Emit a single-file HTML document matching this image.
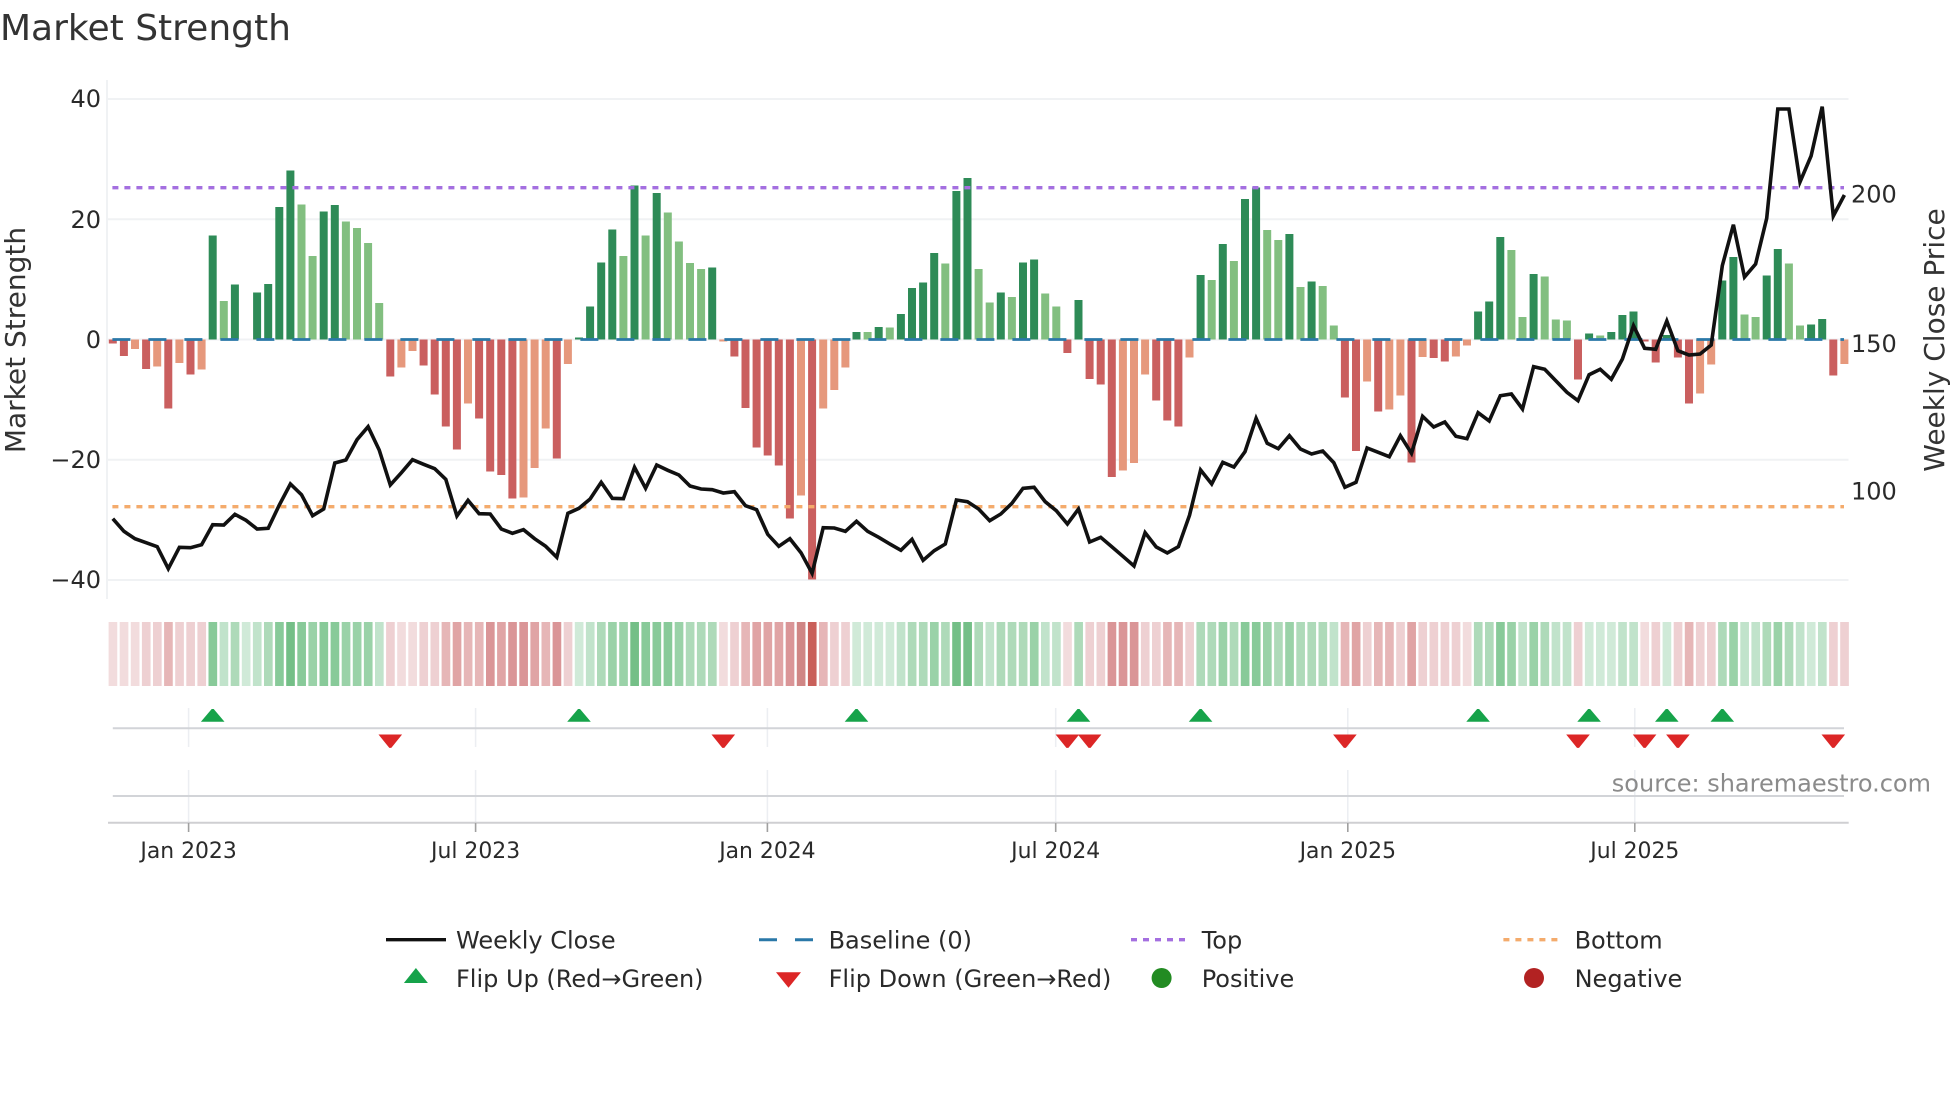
<!DOCTYPE html>
<html><head><meta charset="utf-8"><title>Market Strength</title>
<style>html,body{margin:0;padding:0;background:#fff;width:1960px;height:1102px;overflow:hidden}svg{display:block}text{font-family:"DejaVu Sans","Liberation Sans",sans-serif}</style></head>
<body>
<svg xmlns="http://www.w3.org/2000/svg" width="1960" height="1102" viewBox="0 0 1960 1102">
<rect width="1960" height="1102" fill="#fff"/>
<defs>
<path id="u" d="M-1 709h2l10.8 12.7h-23.6z" fill="#16a34a"/>
<path id="d" d="M-11.8 734.5h23.6l-10.8 13.4h-2z" fill="#dc2626"/>
</defs>
<g stroke="#f0f2f4" stroke-width="2" fill="none">
<path d="M107 80V599"/>
<path d="M107 99H1848.5M107 219.3H1848.5M107 339.5H1848.5M107 459.7H1848.5M107 580H1848.5"/>
</g>
<g transform="translate(108.8 339.5) scale(11.1 1)">
<path fill="#2e8b57" d="M9 0v-104h.72v104zM11 0v-55h.72v55zM13 0v-47h.72v47zM14 0v-55.5h.72v55.5zM15 0v-132.5h.72v132.5zM16 0v-169h.72v169zM19 0v-128h.72v128zM20 0v-134.5h.72v134.5zM42 0v-2h.72v2zM43 0v-33h.72v33zM44 0v-77h.72v77zM45 0v-110h.72v110zM47 0v-154h.72v154zM49 0v-146.5h.72v146.5zM54 0v-72h.72v72zM67 0v-7.5h.72v7.5zM69 0v-12.5h.72v12.5zM71 0v-25.5h.72v25.5zM72 0v-51.5h.72v51.5zM73 0v-57h.72v57zM74 0v-86.5h.72v86.5zM76 0v-148.5h.72v148.5zM77 0v-161.5h.72v161.5zM80 0v-47h.72v47zM82 0v-77h.72v77zM83 0v-80h.72v80zM87 0v-39.5h.72v39.5zM98 0v-64.5h.72v64.5zM100 0v-95.5h.72v95.5zM102 0v-140.5h.72v140.5zM103 0v-152h.72v152zM106 0v-105.5h.72v105.5zM108 0v-58h.72v58zM123 0v-28h.72v28zM124 0v-38h.72v38zM125 0v-102.5h.72v102.5zM128 0v-65.5h.72v65.5zM133 0v-6h.72v6zM135 0v-7.5h.72v7.5zM136 0v-24.5h.72v24.5zM137 0v-28h.72v28zM140 0v-4.5h.72v4.5zM145 0v-59h.72v59zM146 0v-82.5h.72v82.5zM149 0v-64h.72v64zM150 0v-90.5h.72v90.5zM153 0v-15h.72v15zM154 0v-20.5h.72v20.5z"/>
<path fill="#82bf80" d="M10 0v-38.5h.72v38.5zM17 0v-135h.72v135zM18 0v-83.5h.72v83.5zM21 0v-118h.72v118zM22 0v-111.5h.72v111.5zM23 0v-96.5h.72v96.5zM24 0v-36.5h.72v36.5zM46 0v-83.5h.72v83.5zM48 0v-104h.72v104zM50 0v-127h.72v127zM51 0v-98h.72v98zM52 0v-76.5h.72v76.5zM53 0v-70.5h.72v70.5zM68 0v-7.5h.72v7.5zM70 0v-12h.72v12zM75 0v-76h.72v76zM78 0v-70.5h.72v70.5zM79 0v-37h.72v37zM81 0v-42.5h.72v42.5zM84 0v-46h.72v46zM85 0v-33h.72v33zM99 0v-59.5h.72v59.5zM101 0v-78.5h.72v78.5zM104 0v-109.5h.72v109.5zM105 0v-99.5h.72v99.5zM107 0v-52.5h.72v52.5zM109 0v-53.5h.72v53.5zM110 0v-14h.72v14zM126 0v-89.5h.72v89.5zM127 0v-22.5h.72v22.5zM129 0v-63h.72v63zM130 0v-20h.72v20zM131 0v-19h.72v19zM134 0v-4h.72v4zM147 0v-25h.72v25zM148 0v-22.5h.72v22.5zM151 0v-76h.72v76zM152 0v-14h.72v14z"/>
<path fill="#ca5f5f" d="M0 0v4h.72v-4zM1 0v16.5h.72v-16.5zM3 0v29.5h.72v-29.5zM5 0v69h.72v-69zM7 0v35h.72v-35zM25 0v37h.72v-37zM28 0v26h.72v-26zM29 0v55h.72v-55zM30 0v87h.72v-87zM31 0v110h.72v-110zM33 0v79h.72v-79zM34 0v132h.72v-132zM35 0v135.5h.72v-135.5zM36 0v159h.72v-159zM40 0v119h.72v-119zM56 0v17h.72v-17zM57 0v68.5h.72v-68.5zM58 0v108h.72v-108zM59 0v116h.72v-116zM60 0v126h.72v-126zM61 0v179h.72v-179zM63 0v240h.72v-240zM86 0v13.5h.72v-13.5zM88 0v39.5h.72v-39.5zM89 0v45h.72v-45zM90 0v137.5h.72v-137.5zM94 0v61h.72v-61zM95 0v81h.72v-81zM96 0v87h.72v-87zM111 0v58h.72v-58zM112 0v111.5h.72v-111.5zM114 0v72h.72v-72zM117 0v123h.72v-123zM119 0v18.5h.72v-18.5zM120 0v22h.72v-22zM132 0v40h.72v-40zM138 0v2h.72v-2zM139 0v23h.72v-23zM141 0v18h.72v-18zM142 0v64h.72v-64zM155 0v36h.72v-36z"/>
<path fill="#e6987c" d="M2 0v9.5h.72v-9.5zM4 0v27h.72v-27zM6 0v23.5h.72v-23.5zM8 0v30h.72v-30zM26 0v28h.72v-28zM27 0v11.5h.72v-11.5zM32 0v64h.72v-64zM37 0v158h.72v-158zM38 0v128.5h.72v-128.5zM39 0v89h.72v-89zM41 0v24.5h.72v-24.5zM55 0v2h.72v-2zM62 0v156h.72v-156zM64 0v69h.72v-69zM65 0v50.5h.72v-50.5zM66 0v28h.72v-28zM91 0v131h.72v-131zM92 0v123.5h.72v-123.5zM93 0v35h.72v-35zM97 0v18h.72v-18zM113 0v42h.72v-42zM115 0v70h.72v-70zM116 0v56h.72v-56zM118 0v17.5h.72v-17.5zM121 0v17h.72v-17zM122 0v6h.72v-6zM143 0v54h.72v-54zM144 0v25h.72v-25zM156 0v24.5h.72v-24.5z"/>
</g>
<path d="M112.4 339.5H1844" stroke="#2a78a8" stroke-width="2.8" stroke-dasharray="18 18" fill="none"/>
<path d="M112.4 187.7H1844" stroke="#a46fe0" stroke-width="3.4" stroke-dasharray="6 6" fill="none"/>
<path d="M112.4 506.7H1844" stroke="#f4ab6c" stroke-width="3.4" stroke-dasharray="6 6" fill="none"/>
<polyline transform="translate(112.8 0) scale(11.1 1)" fill="none" stroke="#111" stroke-width="3.6" stroke-linejoin="miter" vector-effect="non-scaling-stroke" points="0,518.7 1,531.3 2,538.7 3,542.7 4,546.7 5,568.7 6,547.3 7,547.7 8,544.7 9,524.7 10,525 11,514.3 12,520.3 13,529 14,528.3 15,505 16,484 17,494.7 18,515.7 19,509 20,463 21,460 22,439.7 23,426.7 24,450 25,485 26,472.7 27,459.7 28,464.3 29,468.7 30,479.3 31,516 32,500.3 33,513.7 34,514 35,529 36,533.3 37,529.7 38,538.7 39,546.3 40,557.3 41,513.3 42,508.3 43,499 44,482.3 45,498.3 46,498.7 47,467.3 48,488.3 49,465 50,470.3 51,475 52,486 53,489 54,489.7 55,493 56,491.7 57,505.7 58,509.7 59,534.3 60,546.3 61,538.7 62,552.7 63,573.3 64,527.7 65,528 66,531.3 67,521.3 68,531.3 69,537.3 70,544 71,550.3 72,539.3 73,560.3 74,550.7 75,544 76,500 77,501.7 78,509 79,520.7 80,514 81,503.3 82,488.3 83,487.3 84,501.7 85,510.7 86,524 87,509 88,542 89,537.3 90,546.7 91,556.3 92,566 93,532.7 94,547 95,553 96,546.7 97,515.3 98,470 99,484 100,462.3 101,467 102,451.7 103,418.3 104,443.3 105,448.7 106,435.7 107,449 108,454 109,451 110,462.7 111,487.3 112,482.3 113,448 114,452.3 115,456.7 116,435.7 117,453.3 118,416.3 119,427 120,422 121,436.3 122,438.7 123,412.7 124,421 125,395.7 126,394 127,409 128,366.7 129,369.3 130,380.7 131,392.3 132,400.7 133,374.7 134,369.3 135,379.3 136,359 137,325.7 138,348.3 139,349.3 140,321 141,350.7 142,355 143,354 144,345 145,265.7 146,224.7 147,277 148,264 149,218.3 150,109 151,109 152,182 153,156 154,106.7 155,216 156,195"/>
<g transform="translate(108.6 622) scale(11.1 64)">
<path fill="#d0ead8" d="M12 0h.78v1h-.78zM42 0h.78v1h-.78zM67 0h.78v1h-.78zM68 0h.78v1h-.78zM69 0h.78v1h-.78zM70 0h.78v1h-.78zM133 0h.78v1h-.78zM134 0h.78v1h-.78zM135 0h.78v1h-.78zM140 0h.78v1h-.78zM153 0h.78v1h-.78z"/>
<path fill="#c1e3cb" d="M10 0h.78v1h-.78zM13 0h.78v1h-.78zM24 0h.78v1h-.78zM43 0h.78v1h-.78zM71 0h.78v1h-.78zM79 0h.78v1h-.78zM84 0h.78v1h-.78zM85 0h.78v1h-.78zM110 0h.78v1h-.78zM127 0h.78v1h-.78zM130 0h.78v1h-.78zM131 0h.78v1h-.78zM136 0h.78v1h-.78zM137 0h.78v1h-.78zM147 0h.78v1h-.78zM148 0h.78v1h-.78zM152 0h.78v1h-.78zM154 0h.78v1h-.78z"/>
<path fill="#aedab9" d="M11 0h.78v1h-.78zM14 0h.78v1h-.78zM44 0h.78v1h-.78zM52 0h.78v1h-.78zM53 0h.78v1h-.78zM54 0h.78v1h-.78zM72 0h.78v1h-.78zM73 0h.78v1h-.78zM75 0h.78v1h-.78zM78 0h.78v1h-.78zM80 0h.78v1h-.78zM81 0h.78v1h-.78zM82 0h.78v1h-.78zM87 0h.78v1h-.78zM98 0h.78v1h-.78zM99 0h.78v1h-.78zM101 0h.78v1h-.78zM105 0h.78v1h-.78zM107 0h.78v1h-.78zM108 0h.78v1h-.78zM109 0h.78v1h-.78zM123 0h.78v1h-.78zM124 0h.78v1h-.78zM129 0h.78v1h-.78zM145 0h.78v1h-.78zM149 0h.78v1h-.78zM151 0h.78v1h-.78z"/>
<path fill="#9ad2a8" d="M18 0h.78v1h-.78zM21 0h.78v1h-.78zM22 0h.78v1h-.78zM23 0h.78v1h-.78zM45 0h.78v1h-.78zM46 0h.78v1h-.78zM51 0h.78v1h-.78zM74 0h.78v1h-.78zM83 0h.78v1h-.78zM100 0h.78v1h-.78zM104 0h.78v1h-.78zM106 0h.78v1h-.78zM126 0h.78v1h-.78zM128 0h.78v1h-.78zM146 0h.78v1h-.78zM150 0h.78v1h-.78z"/>
<path fill="#88ca99" d="M9 0h.78v1h-.78zM15 0h.78v1h-.78zM17 0h.78v1h-.78zM19 0h.78v1h-.78zM20 0h.78v1h-.78zM48 0h.78v1h-.78zM49 0h.78v1h-.78zM50 0h.78v1h-.78zM102 0h.78v1h-.78zM103 0h.78v1h-.78zM125 0h.78v1h-.78z"/>
<path fill="#74bf87" d="M16 0h.78v1h-.78zM47 0h.78v1h-.78zM76 0h.78v1h-.78zM77 0h.78v1h-.78z"/>
<path fill="#f2dcdd" d="M0 0h.78v1h-.78zM1 0h.78v1h-.78zM2 0h.78v1h-.78zM26 0h.78v1h-.78zM27 0h.78v1h-.78zM55 0h.78v1h-.78zM86 0h.78v1h-.78zM122 0h.78v1h-.78zM138 0h.78v1h-.78z"/>
<path fill="#eed0d2" d="M3 0h.78v1h-.78zM4 0h.78v1h-.78zM6 0h.78v1h-.78zM7 0h.78v1h-.78zM8 0h.78v1h-.78zM25 0h.78v1h-.78zM28 0h.78v1h-.78zM29 0h.78v1h-.78zM41 0h.78v1h-.78zM56 0h.78v1h-.78zM65 0h.78v1h-.78zM66 0h.78v1h-.78zM88 0h.78v1h-.78zM89 0h.78v1h-.78zM93 0h.78v1h-.78zM94 0h.78v1h-.78zM97 0h.78v1h-.78zM113 0h.78v1h-.78zM116 0h.78v1h-.78zM118 0h.78v1h-.78zM119 0h.78v1h-.78zM120 0h.78v1h-.78zM121 0h.78v1h-.78zM132 0h.78v1h-.78zM139 0h.78v1h-.78zM141 0h.78v1h-.78zM143 0h.78v1h-.78zM144 0h.78v1h-.78zM155 0h.78v1h-.78zM156 0h.78v1h-.78z"/>
<path fill="#e6b6b7" d="M5 0h.78v1h-.78zM30 0h.78v1h-.78zM32 0h.78v1h-.78zM33 0h.78v1h-.78zM39 0h.78v1h-.78zM57 0h.78v1h-.78zM64 0h.78v1h-.78zM95 0h.78v1h-.78zM96 0h.78v1h-.78zM111 0h.78v1h-.78zM114 0h.78v1h-.78zM115 0h.78v1h-.78zM142 0h.78v1h-.78z"/>
<path fill="#e0a4a5" d="M31 0h.78v1h-.78zM35 0h.78v1h-.78zM38 0h.78v1h-.78zM58 0h.78v1h-.78zM59 0h.78v1h-.78zM60 0h.78v1h-.78zM112 0h.78v1h-.78zM117 0h.78v1h-.78z"/>
<path fill="#da9597" d="M34 0h.78v1h-.78zM36 0h.78v1h-.78zM37 0h.78v1h-.78zM40 0h.78v1h-.78zM61 0h.78v1h-.78zM90 0h.78v1h-.78zM91 0h.78v1h-.78zM92 0h.78v1h-.78z"/>
<path fill="#d08685" d="M62 0h.78v1h-.78z"/>
<path fill="#c9605a" d="M63 0h.78v1h-.78z"/>
</g>
<g stroke="#eceef2" stroke-width="1.5" fill="none">
<path d="M188.6 708V747M475.6 708V747M767.4 708V747M1055.7 708V747M1347.8 708V747M1634.8 708V747"/>
<path d="M188.6 770V822M475.6 770V822M767.4 770V822M1055.7 770V822M1347.8 770V822M1634.8 770V822"/>
</g>
<g stroke="#d2d4d8" stroke-width="2" fill="none">
<path d="M112.8 728.3H1844M112.8 796H1844"/>
</g>
<path d="M108 822.7H1848.7" stroke="#cfcfd2" stroke-width="2" fill="none"/>
<path d="M188.6 823V832M475.6 823V832M767.4 823V832M1055.7 823V832M1347.8 823V832M1634.8 823V832" stroke="#a0a0a0" stroke-width="1.6" fill="none"/>
<use href="#u" x="212.7"/><use href="#u" x="579"/><use href="#u" x="856.5"/><use href="#u" x="1078.5"/><use href="#u" x="1200.6"/><use href="#u" x="1478.1"/><use href="#u" x="1589.1"/><use href="#u" x="1666.8"/><use href="#u" x="1722.3"/>
<use href="#d" x="390.3"/><use href="#d" x="723.3"/><use href="#d" x="1067.4"/><use href="#d" x="1089.6"/><use href="#d" x="1344.9"/><use href="#d" x="1578"/><use href="#d" x="1644.6"/><use href="#d" x="1677.9"/><use href="#d" x="1833.3"/>
<text x="0" y="40" font-size="36" fill="#333">Market Strength</text>
<g font-size="24" fill="#2a2a2a" text-anchor="end">
<text x="101" y="107">40</text><text x="101" y="228">20</text><text x="101" y="348">0</text><text x="101" y="468">−20</text><text x="101" y="588">−40</text>
</g>
<g font-size="24" fill="#2a2a2a">
<text x="1851" y="202.7">200</text><text x="1851" y="352">150</text><text x="1851" y="499.3">100</text>
</g>
<text transform="translate(25 340) rotate(-90)" font-size="28" fill="#333" text-anchor="middle">Market Strength</text>
<text transform="translate(1944 340) rotate(-90)" font-size="28" fill="#333" text-anchor="middle">Weekly Close Price</text>
<g font-size="21.9" fill="#2a2a2a" text-anchor="middle">
<text x="188.6" y="858">Jan 2023</text><text x="475.6" y="858">Jul 2023</text><text x="767.4" y="858">Jan 2024</text><text x="1055.7" y="858">Jul 2024</text><text x="1347.8" y="858">Jan 2025</text><text x="1634.8" y="858">Jul 2025</text>
</g>
<text x="1931" y="791.7" font-size="24" fill="#8b8b8b" text-anchor="end">source: sharemaestro.com</text>
<path d="M386 939.7H446" stroke="#111" stroke-width="3.4" fill="none"/>
<path d="M759 939.7H813.3" stroke="#2a78a8" stroke-width="3" stroke-dasharray="18 18" fill="none"/>
<path d="M1131 939.7H1186" stroke="#a46fe0" stroke-width="3.4" stroke-dasharray="6 6" fill="none"/>
<path d="M1503.4 939.7H1558" stroke="#f4ab6c" stroke-width="3.4" stroke-dasharray="6 6" fill="none"/>
<path d="M415.9 968l12 15h-24z" fill="#16a34a"/>
<path d="M776 972.3h25l-12.5 15.4z" fill="#dc2626"/>
<circle cx="1161.6" cy="978" r="10" fill="#228b22"/>
<circle cx="1534" cy="978" r="10" fill="#b22222"/>
<g font-size="24" fill="#2a2a2a">
<text x="456" y="948.6">Weekly Close</text><text x="828.6" y="948.6">Baseline (0)</text><text x="1201.7" y="948.6">Top</text><text x="1574.6" y="948.6">Bottom</text>
<text x="456" y="986.8">Flip Up (Red→Green)</text><text x="828.6" y="986.8">Flip Down (Green→Red)</text><text x="1201.7" y="986.8">Positive</text><text x="1574.6" y="986.8">Negative</text>
</g>
</svg>
</body></html>
